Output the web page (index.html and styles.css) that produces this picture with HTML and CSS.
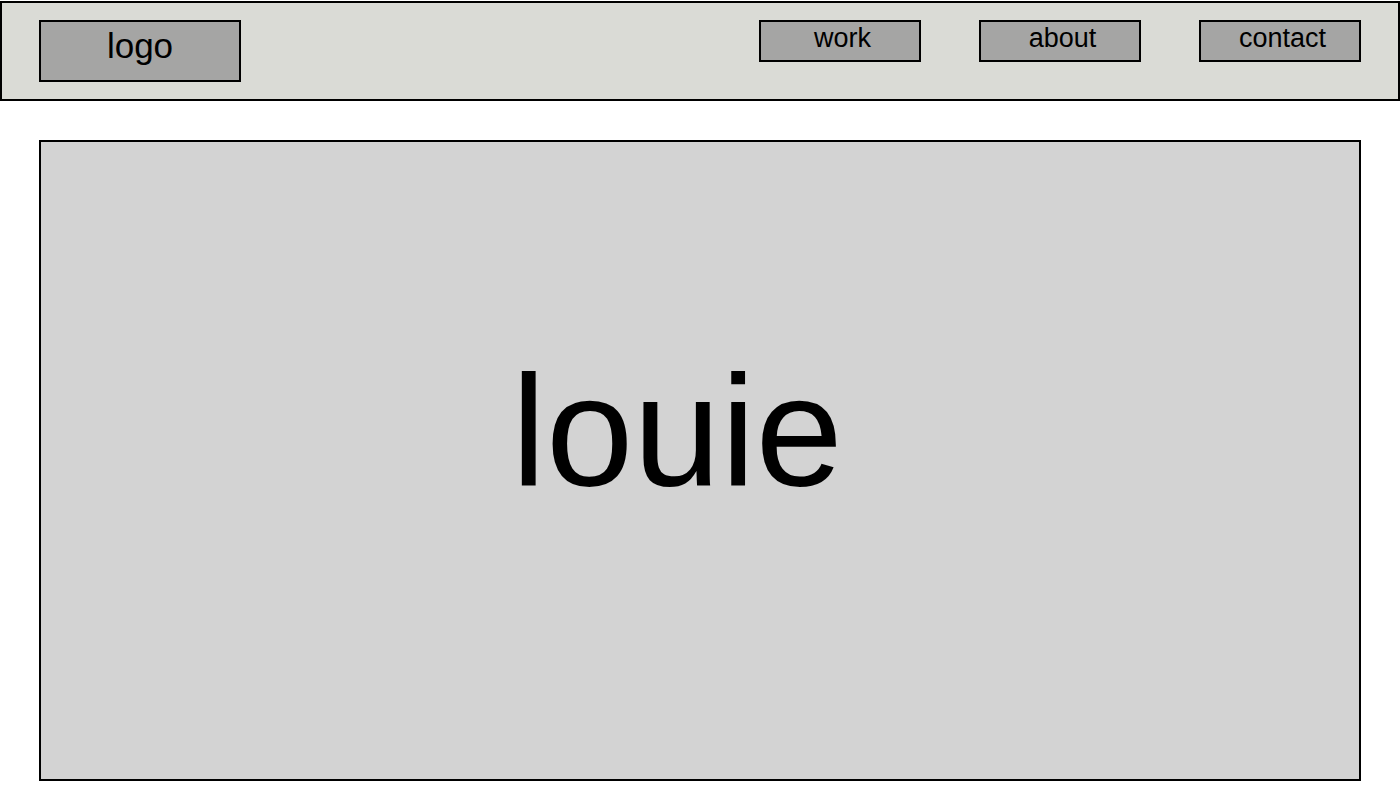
FILE: index.html
```html
<!DOCTYPE html>
<html lang="en">
<head>
<meta charset="utf-8">
<title>louie</title>
<link rel="stylesheet" href="styles.css">
</head>
<body>
<header class="site-header">
  <div class="logo">logo</div>
  <nav class="nav">
    <a class="nav-item" href="#">work</a>
    <a class="nav-item" href="#">about</a>
    <a class="nav-item" href="#">contact</a>
  </nav>
</header>
<main class="hero">
  <h1 class="hero-title">louie</h1>
</main>
</body>
</html>
```

FILE: styles.css
```css
* { box-sizing: border-box; }
html, body { margin: 0; padding: 0; background: #ffffff; }
body {
  font-family: "Liberation Sans", Arial, Helvetica, sans-serif;
  color: #000;
}
.site-header {
  margin-top: 1px;
  height: 100px;
  border: 2px solid #000;
  background: #dadbd6;
  display: flex;
  justify-content: space-between;
  align-items: flex-start;
  padding: 17px 37px 0 37px;
}
.logo {
  width: 202px;
  height: 62px;
  border: 2px solid #000;
  background: #a5a5a4;
  font-size: 35px;
  text-align: center;
  padding: 4px 0 0 0;
  line-height: normal;
}
.nav {
  display: flex;
  gap: 58px;
}
.nav-item {
  display: block;
  width: 162px;
  height: 42px;
  border: 2px solid #000;
  background: #a5a5a4;
  color: #000;
  text-decoration: none;
  font-size: 27px;
  text-align: center;
  line-height: 27px;
  padding: 3px 0 0 5px;
}
.hero {
  margin: 39px 0 0 39px;
  width: 1322px;
  height: 641px;
  border: 2px solid #000;
  background: #d3d3d3;
  padding: 199px 46px 0 0;
  text-align: center;
}
.hero-title {
  margin: 0;
  font-weight: normal;
  font-size: 157px;
  line-height: normal;
}
```
